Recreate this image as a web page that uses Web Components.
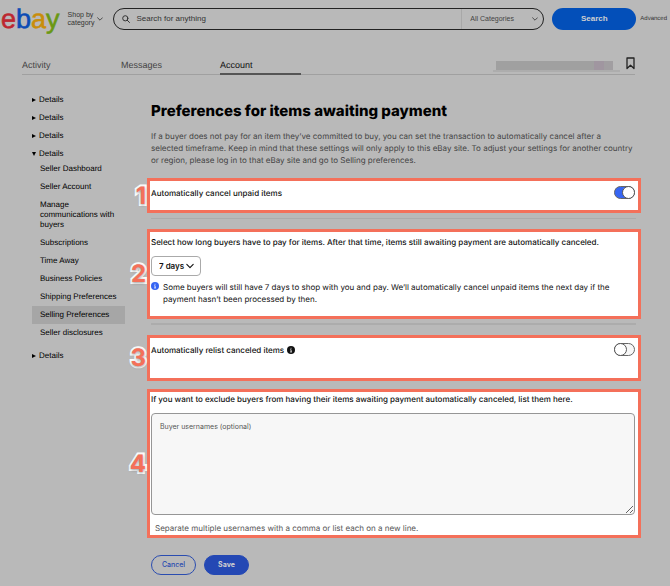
<!DOCTYPE html>
<html lang="en">
<head>
<meta charset="utf-8">
<meta name="viewport" content="width=device-width, initial-scale=1">
<title>Preferences for items awaiting payment</title>
<style>
  body {
    margin: 0;
    background: #b9b9b9;
    color: #111;
    font: 400 8px/12px Inter, "Liberation Sans", sans-serif;
    text-rendering: geometricPrecision;
    --coral: #f4705a;
    --blue: #3665f3;
    --muted: #444;
  }
  .page {
    display: flex;
    gap: 22px;
    padding: 16px 29px 11px 32px;
  }
  .content {
    flex: 1;
    min-width: 0;
    padding-top: 10px;
  }
  h1 {
    margin: 0 4px 9px;
    font-size: 15px;
    line-height: 20px;
    font-weight: 800;
    color: #000;
  }
  .intro {
    margin: 0 7px 12px 4px;
    color: var(--muted);
  }
  hr {
    border: 0;
    border-top: 1px solid #acacac;
    margin: 5px 5px 10px 4px;
  }
  hr.thick {
    border-top-width: 2px;
    margin: 4px 5px 10px 4px;
  }
  .actions {
    display: flex;
    gap: 8px;
    margin: 17px 4px 0;
  }
</style>
</head>
<body>

<site-header></site-header>
<account-tabs></account-tabs>

<div class="page">
  <side-nav></side-nav>
  <main class="content">
    <h1>Preferences for items awaiting payment</h1>
    <p class="intro">If a buyer does not pay for an item they’ve committed to buy, you can set the transaction to automatically cancel after a selected timeframe. Keep in mind that these settings will only apply to this eBay site. To adjust your settings for another country or region, please log in to that eBay site and go to Selling preferences.</p>

    <callout-box number="1" style="--pad-top: 5px; --pad-bottom: 11px">
      <toggle-row checked>Automatically cancel unpaid items</toggle-row>
    </callout-box>
    <hr>
    <callout-box number="2" style="--pad-bottom: 11px">
      <payment-window>Select how long buyers have to pay for items. After that time, items still awaiting payment are automatically canceled.
        <span slot="note">Some buyers will still have 7 days to shop with you and pay. We’ll automatically cancel unpaid items the next day if the payment hasn’t been processed by then.</span>
      </payment-window>
    </callout-box>
    <hr class="thick">
    <callout-box number="3" style="--pad-top: 5px; --pad-bottom: 22px">
      <toggle-row info>Automatically relist canceled items</toggle-row>
    </callout-box>
    <callout-box number="4" style="--pad-top: 1px; --pad-bottom: 1px; margin-top: 8px">
      <exclude-list>If you want to exclude buyers from having their items awaiting payment automatically canceled, list them here.
        <span slot="hint">Separate multiple usernames with a comma or list each on a new line.</span>
      </exclude-list>
    </callout-box>

    <div class="actions">
      <pill-button>Cancel</pill-button>
      <pill-button primary>Save</pill-button>
    </div>
  </main>
</div>

<script>
const chevron = (size) => `
  <svg class="chevron" width="${size}" height="${size}" viewBox="0 0 8 8" fill="none" stroke="currentColor" stroke-width="1.1" stroke-linecap="round" stroke-linejoin="round" aria-hidden="true"><path d="M.8 2.400 4 5.600 7.200 2.400"/></svg>`;

const infoIcon = `
  <svg width="8" height="8" viewBox="0 0 8 8" aria-hidden="true"><circle cx="4" cy="4" r="4" fill="currentColor"/><path d="M4 1.800v.9M3.300 3.700H4.100V6M3.200 6h1.700" fill="none" stroke="#fff" stroke-width=".8"/></svg>`;

function define(name, html, setup) {
  const template = document.createElement('template');
  template.innerHTML = html;
  customElements.define(name, class extends HTMLElement {
    constructor() {
      super();
      this.attachShadow({ mode: 'open' });
      this.shadowRoot.appendChild(template.content.cloneNode(true));
    }

    connectedCallback() {
      if (setup) setup(this, this.shadowRoot);
    }
  });
}

define('site-header', `
  <style>
    :host { display: block; font-family: "Liberation Sans", Arial, sans-serif; }
    header {
      display: flex;
      align-items: center;
      padding: 4px 3px 4px 1px;
      color: #333;
    }
    a { color: inherit; text-decoration: none; }
    .logo {
      font: 27px/30px "Liberation Sans", Arial, sans-serif;
      -webkit-text-stroke: 0.6px;
    }
    .e { color: #bd2730; }
    .b { color: #0b4bb5; }
    .a { color: #c98d0a; }
    .y { color: #6a9813; }
    .shop {
      display: flex;
      align-items: center;
      gap: 3px;
      margin: 0 10px 0 8px;
      padding: 0;
      border: 0;
      background: none;
      font: inherit;
      font-size: 7px;
      line-height: 8px;
      text-align: left;
      color: inherit;
    }
    form {
      flex: 1;
      display: flex;
      align-items: center;
      gap: 8px;
    }
    .box {
      flex: 1;
      display: flex;
      align-items: center;
      box-sizing: border-box;
      height: 22px;
      padding: 0 5px 0 8px;
      border: 1px solid #222;
      border-radius: 11px;
    }
    input {
      flex: 1;
      min-width: 0;
      padding: 0 0 0 6px;
      border: 0;
      background: none;
      font: inherit;
      outline: 0;
    }
    input::placeholder { color: #333; opacity: 1; }
    .cats {
      display: flex;
      align-items: center;
      align-self: stretch;
      padding-left: 8px;
      border-left: 1px solid #a8a8a8;
    }
    select {
      appearance: none;
      width: 62px;
      padding: 0;
      border: 0;
      background: none;
      font: inherit;
      font-size: 7px;
      color: #444;
    }
    button.go {
      width: 84px;
      height: 22px;
      border: 0;
      border-radius: 11px;
      background: #034fb9;
      color: #d0d0d0;
      font: inherit;
      font-weight: 700;
    }
    .adv { margin-left: 4px; font-size: 6px; }
  </style>
  <header>
    <a class="logo" href="#" aria-label="eBay home"><span class="e">e</span><span class="b">b</span><span class="a">a</span><span class="y">y</span></a>
    <button class="shop" type="button"><span>Shop by<br>category</span>${chevron(6)}</button>
    <form role="search">
      <div class="box">
        <svg width="8" height="8" viewBox="0 0 8 8" fill="none" stroke="#333" stroke-linecap="round" aria-hidden="true"><circle cx="3.3" cy="3.3" r="2.6"/><path d="m5.3 5.3 2.2 2.2"/></svg>
        <input type="text" placeholder="Search for anything" aria-label="Search for anything">
        <div class="cats">
          <select aria-label="Category"><option>All Categories</option></select>
          ${chevron(6)}
        </div>
      </div>
      <button class="go" type="button">Search</button>
    </form>
    <a class="adv" href="#">Advanced</a>
  </header>
`);

define('account-tabs', `
  <style>
    :host {
      display: block;
      padding: 18px 35px 0 22px;
      font-family: "Liberation Sans", Arial, sans-serif;
      font-size: 9px;
    }
    nav {
      display: flex;
      align-items: flex-end;
      gap: 18px;
      border-bottom: 1px solid #a0a0a0;
    }
    a {
      width: 81px;
      padding: 3px 0 2px;
      border-bottom: 2px solid transparent;
      margin-bottom: -1px;
      color: #444;
      text-decoration: none;
    }
    a[aria-current] { color: #111; border-color: #555; }
    .user {
      display: flex;
      gap: 6px;
      margin: 0 0 2px auto;
    }
    .name {
      width: 117px;
      height: 9px;
      margin: 4px 7px 0 3px;
      background: linear-gradient(90deg, #a0a0a0 0 84%, #a096a0 84% 92%, #a19ea1 92%);
    }
    .plate { background: linear-gradient(#b9b9b9 13px, #adadad 13px); height: 15px; }
  </style>
  <nav>
    <a href="#">Activity</a>
    <a href="#">Messages</a>
    <a href="#" aria-current="page">Account</a>
    <div class="user">
      <div class="plate"><div class="name"></div></div>
      <svg width="9" height="13" viewBox="0 0 9 13" fill="none" stroke="#222" stroke-width="1.3" stroke-linejoin="round" aria-label="Saved"><path d="M1 1h7v10.500L4.500 8.200 1 11.500z"/></svg>
    </div>
  </nav>
`);

define('side-nav', `
  <style>
    :host {
      display: block;
      width: 93px;
      font-family: "Liberation Sans", Arial, sans-serif;
      line-height: 10px;
      color: #000;
    }
    summary {
      display: flex;
      align-items: center;
      gap: 3px;
      padding: 4px 0;
      list-style: none;
    }
    summary::before {
      content: "";
      border-left: 4px solid #000;
      border-top: 2px solid transparent;
      border-bottom: 2px solid transparent;
    }
    [open] > summary { padding-bottom: 0; }
    [open] > summary::before {
      border: 2px solid transparent;
      border-top: 4px solid #000;
      border-bottom: 0;
    }
    ul { margin: 0 0 5px; padding: 1px 0 0; list-style: none; }
    a {
      display: block;
      padding: 4px 8px;
      color: inherit;
      text-decoration: none;
    }
    a[aria-current] { background: #a6a6a6; }
  </style>
  <details><summary>Details</summary></details>
  <details><summary>Details</summary></details>
  <details><summary>Details</summary></details>
  <details open>
    <summary>Details</summary>
    <ul>
      <li><a href="#">Seller Dashboard</a></li>
      <li><a href="#">Seller Account</a></li>
      <li><a href="#">Manage communications with buyers</a></li>
      <li><a href="#">Subscriptions</a></li>
      <li><a href="#">Time Away</a></li>
      <li><a href="#">Business Policies</a></li>
      <li><a href="#">Shipping Preferences</a></li>
      <li><a href="#" aria-current="page">Selling Preferences</a></li>
      <li><a href="#">Seller disclosures</a></li>
    </ul>
  </details>
  <details><summary>Details</summary></details>
`);

define('callout-box', `
  <style>
    :host {
      display: block;
      position: relative;
      padding: var(--pad-top, 4px) 3px var(--pad-bottom, 4px) 1px;
      border: 3px solid var(--coral);
      background: #fff;
    }
    /* step number hangs over the left edge of the frame */
    .number {
      position: absolute;
      right: 100%;
      top: 50%;
      margin-right: 4px;
      transform: translateY(-50%);
      font: 700 24px/24px Inter, sans-serif;
      color: var(--coral);
      -webkit-text-stroke: 4px #fff;
      paint-order: stroke fill;
      text-shadow: 0 1px 3px rgba(0, 0, 0, 0.4);
    }
  </style>
  <span class="number"></span>
  <slot></slot>
`, (el, root) => {
  root.querySelector('.number').textContent = el.getAttribute('number');
});

define('toggle-row', `
  <style>
    :host { display: block; }
    .row { display: flex; align-items: center; gap: 3px; }
    label { font-weight: 500; }
    input {
      appearance: none;
      position: relative;
      box-sizing: border-box;
      width: 21px;
      height: 13px;
      margin: 0 0 0 auto;
      border: 1px solid #666;
      border-radius: 7px;
      background: #f7f7f7;
    }
    input::before {
      content: "";
      position: absolute;
      top: -1px;
      left: -1px;
      box-sizing: border-box;
      width: 13px;
      height: 13px;
      border: 1px solid #555;
      border-radius: 50%;
      background: #fff;
    }
    input:checked { background: var(--blue); }
    input:checked::before { left: auto; right: -1px; }
    .info { display: none; }
    :host([info]) .info { display: flex; }
  </style>
  <div class="row">
    <label for="t"><slot></slot></label>
    <span class="info">${infoIcon}</span>
    <input type="checkbox" role="switch" id="t">
  </div>
`, (el, root) => {
  root.querySelector('input').checked = el.hasAttribute('checked');
});

define('payment-window', `
  <style>
    :host { display: block; }
    label { display: block; margin-bottom: 8px; font-weight: 500; }
    .select {
      display: grid;
      width: 50px;
      align-items: center;
    }
    .select > * { grid-area: 1 / 1; }
    select {
      appearance: none;
      box-sizing: border-box;
      width: 100%;
      height: 20px;
      padding: 0 7px;
      border: 1px solid #aaa;
      border-radius: 4px;
      background: #fff;
      font: inherit;
      font-weight: 600;
      color: #111;
    }
    .chevron { justify-self: end; margin-right: 7px; pointer-events: none; }
    .note {
      display: flex;
      gap: 4px;
      margin-top: 5px;
    }
    .icon { padding-top: 1px; line-height: 8px; color: var(--blue); }
  </style>
  <label for="days"><slot></slot></label>
  <div class="select">
    <select id="days"><option>7 days</option></select>
    ${chevron(8)}
  </div>
  <div class="note"><span class="icon">${infoIcon}</span><slot name="note"></slot></div>
`);

define('exclude-list', `
  <style>
    :host { display: block; }
    label { display: block; margin-bottom: 8px; font-weight: 500; }
    textarea {
      display: block;
      box-sizing: border-box;
      width: 100%;
      height: 102px;
      padding: 7px 8px;
      border: 1px solid #969696;
      border-radius: 4px;
      background: #f7f7f7;
      font: inherit;
      font-size: 7px;
      outline: 0;
    }
    textarea::placeholder { color: #555; opacity: 1; }
    .hint { margin: 7px 4px 0; color: #555; }
  </style>
  <label for="names"><slot></slot></label>
  <textarea id="names" placeholder="Buyer usernames (optional)"></textarea>
  <div class="hint"><slot name="hint"></slot></div>
`);

define('pill-button', `
  <style>
    :host { display: block; }
    button {
      width: 45px;
      height: 20px;
      padding: 0;
      border: 1px solid #2a4cb0;
      border-radius: 10px;
      background: none;
      color: #2a4cb0;
      font: inherit;
      font-size: 7px;
      font-weight: 500;
    }
    :host([primary]) button {
      background: #2448b4;
      border-color: #2448b4;
      color: #d0d0d0;
      font-weight: 700;
    }
  </style>
  <button type="button"><slot></slot></button>
`);
</script>
</body>
</html>
